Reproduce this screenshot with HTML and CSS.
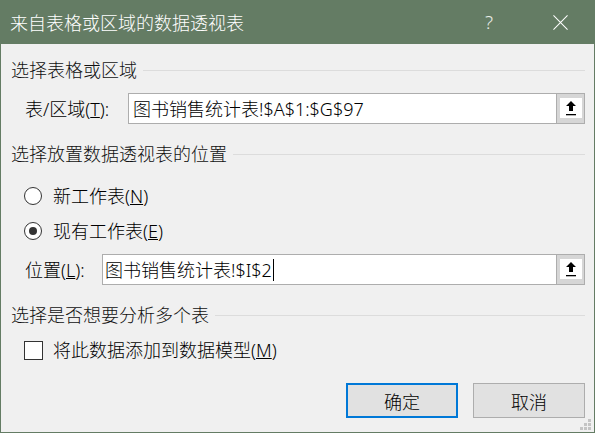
FILE: index.html
```html
<!DOCTYPE html>
<html lang="zh-CN">
<head>
<meta charset="utf-8">
<title>来自表格或区域的数据透视表</title>
<link rel="stylesheet" href="styles.css">
</head>
<body>
<div class="window">
  <div class="titlebar">
    <span class="title">来自表格或区域的数据透视表</span>
    <span class="help">?</span>
    <span class="close"><svg width="16" height="16" viewBox="0 0 16 16"><path d="M0.5 0.5L15.5 15.5M15.5 0.5L0.5 15.5" stroke="#ffffff" stroke-width="1.1" fill="none"/></svg></span>
  </div>
  <div class="content">
    <div class="group-title group-first"><span>选择表格或区域</span></div>
    <div class="field-row field-range">
      <span class="field-label label-range">表/区域(<u>T</u>):</span>
      <div class="ref-input">
        <span class="ref-text text-range">图书销售统计表!$A$1:$G$97</span>
        <span class="pick"><span class="pick-face"><svg width="10" height="15" viewBox="0 0 10 15"><path d="M5 0L10 5H7V10H3V5H0Z" fill="#000"/><rect x="0" y="13" width="10" height="1.3" fill="#000"/></svg></span></span>
      </div>
    </div>

    <div class="group-title group-mid"><span>选择放置数据透视表的位置</span></div>
    <div class="option-row option-first">
      <span class="radio"></span>
      <span class="option-text">新工作表(<u>N</u>)</span>
    </div>
    <div class="option-row option-next">
      <span class="radio radio-checked"></span>
      <span class="option-text">现有工作表(<u>E</u>)</span>
    </div>
    <div class="field-row field-location">
      <span class="field-label label-location">位置(<u>L</u>):</span>
      <div class="ref-input">
        <span class="ref-text text-location">图书销售统计表!$I$2<span class="caret"></span></span>
        <span class="pick"><span class="pick-face"><svg width="10" height="15" viewBox="0 0 10 15"><path d="M5 0L10 5H7V10H3V5H0Z" fill="#000"/><rect x="0" y="13" width="10" height="1.3" fill="#000"/></svg></span></span>
      </div>
    </div>

    <div class="group-title group-mid2"><span>选择是否想要分析多个表</span></div>
    <div class="option-row option-check">
      <span class="checkbox"></span>
      <span class="option-text check-text">将此数据添加到数据模型(<u>M</u>)</span>
    </div>

    <div class="button-row">
      <button class="btn btn-default">确定</button>
      <button class="btn">取消</button>
    </div>
  </div>
  <svg class="grip" width="12" height="12" viewBox="0 0 12 12">
    <rect x="8" y="0" width="3" height="3" fill="#c4c4c4"/>
    <rect x="4" y="4" width="3" height="3" fill="#c4c4c4"/>
    <rect x="8" y="4" width="3" height="3" fill="#c4c4c4"/>
    <rect x="0" y="8" width="3" height="3" fill="#c4c4c4"/>
    <rect x="4" y="8" width="3" height="3" fill="#c4c4c4"/>
    <rect x="8" y="8" width="3" height="3" fill="#c4c4c4"/>
  </svg>
</div>
</body>
</html>
```

FILE: styles.css
```css
html, body {
  margin: 0;
  padding: 0;
  background: #f0f0f0;
}

body {
  font-family: "Noto Sans", "Noto Sans CJK SC", sans-serif;
  font-size: 18px;
  font-weight: 300;
  color: #000;
}

.window {
  position: relative;
  width: 595px;
  height: 433px;
  box-sizing: border-box;
  border: 1px solid #647c64;
  border-top: none;
  background: #f0f0f0;
  display: flex;
  flex-direction: column;
}

.titlebar {
  height: 44px;
  flex: none;
  background: #647c64;
  color: #ffffff;
  display: flex;
  align-items: center;
  padding-left: 9px;
  padding-right: 11px;
}

.title {
  flex: 1;
  font-size: 18px;
  line-height: 24px;
  font-family: "Noto Sans CJK SC", sans-serif;
}

.help {
  width: 22px;
  text-align: center;
  font-size: 19px;
  line-height: 24px;
  font-family: "Noto Sans", sans-serif;
  font-weight: 300;
  margin-right: 37px;
  color: #e8ede8;
}

.close {
  width: 46px;
  height: 44px;
  display: flex;
  align-items: center;
  justify-content: center;
}

.close svg {
  display: block;
  width: 15px;
  height: 15px;
}

.content {
  flex: 1;
  display: flex;
  flex-direction: column;
  padding: 0 9px 0 10px;
}

.group-title {
  display: flex;
  align-items: center;
  height: 24px;
  line-height: 24px;
  color: #111;
}

.group-title::after {
  content: "";
  flex: 1;
  height: 1px;
  background: #dcdcdc;
  margin-left: 6px;
}

.group-first { margin-top: 14px; }
.group-mid { margin-top: 18px; }
.group-mid2 { margin-top: 18px; }

.field-row {
  display: flex;
  align-items: center;
  height: 31px;
  margin-top: 11px;
}

.field-label {
  margin-left: 14px;
  line-height: 24px;
  flex: none;
}

.label-range { width: 103px; }
.label-location { width: 77px; }

.ref-input {
  flex: 1;
  height: 31px;
  box-sizing: border-box;
  border: 1px solid #adadad;
  background: #ffffff;
  display: flex;
  align-items: center;
}

.ref-text {
  flex: 1;
  line-height: 24px;
  white-space: nowrap;
  display: flex;
  align-items: center;
}

.text-range { padding-left: 4px; }
.text-location { padding-left: 2px; }

.caret {
  display: inline-block;
  width: 1px;
  height: 22px;
  background: #000;
  margin-left: 1px;
}

.pick {
  width: 28px;
  height: 29px;
  box-sizing: border-box;
  border-left: 1px solid #adadad;
  background: #d6d6d6;
  display: flex;
  align-items: center;
  justify-content: center;
  padding-bottom: 1px;
}

.pick-face {
  width: 22px;
  height: 20px;
  background: #ffffff;
  display: flex;
  align-items: center;
  justify-content: center;
}

.pick-face svg {
  display: block;
}

.option-row {
  display: flex;
  align-items: center;
  height: 24px;
}

.option-first { margin-top: 18px; }
.option-next { margin-top: 11px; }
.option-check { margin-top: 11px; }

.radio {
  width: 18px;
  height: 18px;
  box-sizing: border-box;
  border: 1px solid #333333;
  border-radius: 50%;
  background: #ffffff;
  margin-left: 13px;
  display: flex;
  align-items: center;
  justify-content: center;
  flex: none;
}

.radio-checked::after {
  content: "";
  width: 8px;
  height: 8px;
  border-radius: 50%;
  background: #333333;
}

.option-text {
  margin-left: 11px;
  line-height: 24px;
}

.checkbox {
  width: 19px;
  height: 19px;
  box-sizing: border-box;
  border: 1px solid #333333;
  background: #ffffff;
  margin-left: 13px;
  flex: none;
}

.check-text {
  margin-left: 10px;
}

.button-row {
  display: flex;
  justify-content: flex-end;
  gap: 15px;
  margin-top: 21px;
}

.btn {
  width: 112px;
  height: 35px;
  box-sizing: border-box;
  border: 1px solid #adadad;
  background: #e1e1e1;
  font-family: "Noto Sans CJK SC", sans-serif;
  font-size: 18px;
  font-weight: 300;
  color: #000;
  padding: 0;
  margin: 0;
}

.btn-default {
  border: 2px solid #0078d7;
}

.grip {
  position: absolute;
  right: 2px;
  bottom: 1px;
}
```
